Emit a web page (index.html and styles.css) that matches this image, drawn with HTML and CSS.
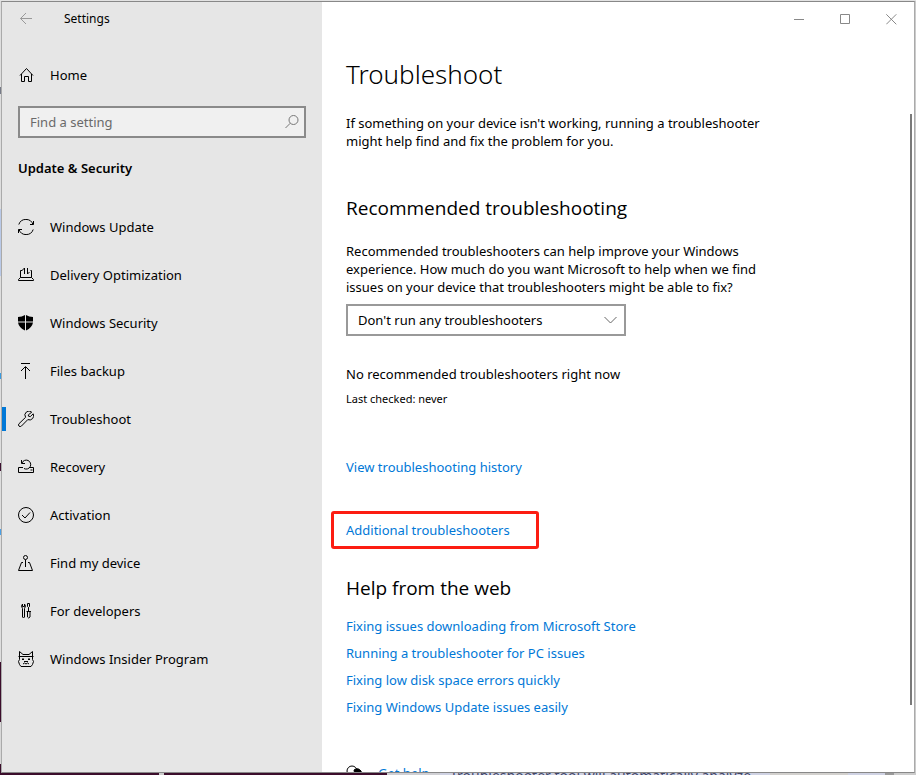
FILE: index.html
```
<!DOCTYPE html>
<html lang="en">
<head>
<meta charset="utf-8">
<title>Settings</title>
<link rel="stylesheet" href="styles.css">
</head>
<body>
<div class="desktop">
  <div class="edge"></div>
  <div class="window">
    <aside class="sidebar">
      <header class="titlebar">
        <button class="back" type="button" aria-label="Back">
          <svg class="icon" viewBox="0 0 16 16"><path d="M14 7.500H2.500M8 2 2.500 7.500 8 13"/></svg>
        </button>
        <span class="app-name">Settings</span>
      </header>
      <a class="item home" href="#">
        <svg class="icon" viewBox="0 0 16 16"><path d="M3.500 7v7.500h3V9.500h4v5h3V7M2 8.500 8.500 1.500 15 8.500"/></svg>
        <span>Home</span>
      </a>
      <label class="search">
        <input type="text" placeholder="Find a setting" aria-label="Find a setting">
        <svg class="icon" viewBox="0 0 16 16"><circle cx="9.500" cy="6" r="4.500"/><path d="M6.300 9.200 1.500 14"/></svg>
      </label>
      <h2 class="group">Update &amp; Security</h2>
      <nav>
        <a class="item" href="#">
          <svg class="icon" viewBox="0 0 16 16"><path d="M.8 5.500A7.500 7.500 0 0 1 15 5.500M15.500 2v3.500H12M15.200 10.500A7.500 7.500 0 0 1 1 10.500M.5 14V10.500H4"/></svg>
          <span>Windows Update</span>
        </a>
        <a class="item" href="#">
          <svg class="icon" viewBox="0 0 16 16"><path d="M4.500 3.500h-2v7h11v-7h-1M2.500 10.500l-2 2v1h15v-1l-2-2M6.500 7V1M4.500 3l2-2M9.500 1v6M9.500 7l2-2"/></svg>
          <span>Delivery Optimization</span>
        </a>
        <a class="item" href="#">
          <svg class="icon solid" viewBox="0 0 16 16"><path d="M0 2Q4 2 7 0v6.500H0zM8 0q3 2 7 2V6.500H8zM0 7.500h7v8Q.8 12.500 0 7.500zM8 7.500h7q-.8 5-7 8z"/></svg>
          <span>Windows Security</span>
        </a>
        <a class="item" href="#">
          <svg class="icon" viewBox="0 0 16 16"><path d="M3 .5h9M7.500 16V4M3 8l4.500-4.500L12 8"/></svg>
          <span>Files backup</span>
        </a>
        <a class="item current" href="#">
          <svg class="icon" viewBox="0 0 16 16"><path d="M13.700 1.200A4 4 0 0 0 7.600 6.300L1 12.700a1.600 1.600 0 0 0 2.400 2.400L9.800 8.600A4.200 4.200 0 0 0 15.200 2.800L12.300 5.600 10.500 5.200 10.300 3.900z"/></svg>
          <span>Troubleshoot</span>
        </a>
        <a class="item" href="#">
          <svg class="icon" viewBox="0 0 16 16"><path d="M5 8.500H.5v5h15v-5H11M12.500 11h2M3.500 1v3.500H7M4 4a4.500 4.500 0 1 1 2 5.500"/></svg>
          <span>Recovery</span>
        </a>
        <a class="item" href="#">
          <svg class="icon" viewBox="0 0 16 16"><circle cx="8" cy="8" r="7.500"/><path d="M4 8l3 3 5-5.500"/></svg>
          <span>Activation</span>
        </a>
        <a class="item" href="#">
          <svg class="icon" viewBox="0 0 16 16"><circle cx="7.500" cy="2.500" r="2"/><path d="M7.500 4.500V12M5 7.500H3.500l-3 8h14l-3-8H10"/></svg>
          <span>Find my device</span>
        </a>
        <a class="item" href="#">
          <svg class="icon" viewBox="0 0 16 16"><path d="M4.500 1Q2.500 3 4.500 5.500V14q1 2 2 0V5.500Q8.500 3 6.500 1v2.500h-2zM9.500.5h2v3l-1 1-1-1zM10.500 4.500v4M8.500 8.500H13M9.500 8.500V14q1 2 2.500 0V8.500"/></svg>
          <span>For developers</span>
        </a>
        <a class="item" href="#">
          <svg class="icon" viewBox="0 0 16 16"><path d="M1.500 5.500v-5L5 3.500h6l3.500-3v5M.5 5.500h15M1.500 5.500v3l-1 2 1 3L3 15.500h10l1.500-2 1-3-1-2v-3M4 8.500h2M10 8.500h2M6 10.500h4M5 13q1.500-2 3 0 1.500-2 3 0M5 7v2M11 7v2"/></svg>
          <span>Windows Insider Program</span>
        </a>
      </nav>
    </aside>
    <main class="content">
      <div class="titlebar controls">
        <button type="button" aria-label="Minimize"><svg viewBox="0 0 11 11"><path d="M0 5.500h10"/></svg></button>
        <button type="button" aria-label="Maximize"><svg viewBox="0 0 11 11"><path d="M.5.500h9v9h-9z"/></svg></button>
        <button type="button" aria-label="Close"><svg viewBox="0 0 11 11"><path d="M.3.300l10 10M10.300.300l-10 10"/></svg></button>
      </div>
      <div class="page">
        <h1>Troubleshoot</h1>
        <p>If something on your device isn't working, running a troubleshooter might help find and fix the problem for you.</p>
        <h2 class="recommended">Recommended troubleshooting</h2>
        <p><label for="mode">Recommended troubleshooters can help improve your Windows experience. How much do you want Microsoft to help when we find issues on your device that troubleshooters might be able to fix?</label></p>
        <div class="picker">
          <select id="mode"><option>Don't run any troubleshooters</option></select>
          <svg viewBox="0 0 13 8"><path d="M.5 1l6 6 6-6"/></svg>
        </div>
        <p>No recommended troubleshooters right now</p>
        <p class="checked">Last checked: never</p>
        <a href="#">View troubleshooting history</a>
        <a class="additional" href="#">Additional troubleshooters</a>
        <h2>Help from the web</h2>
        <ul>
          <li><a href="#">Fixing issues downloading from Microsoft Store</a></li>
          <li><a href="#">Running a troubleshooter for PC issues</a></li>
          <li><a href="#">Fixing low disk space errors quickly</a></li>
          <li><a href="#">Fixing Windows Update issues easily</a></li>
        </ul>
        <a class="get-help" href="#">
          <svg class="icon" viewBox="0 0 16 16"><circle cx="6" cy="7" r="5"/><path class="fill" d="M8 6q4-3 7 1l1 4H9z"/></svg>
          <span>Get help</span>
        </a>
      </div>
      <div class="thumb"></div>
    </main>
  </div>
  <div class="edge right"></div>
  <div class="behind"><span>Troubleshooter tool will automatically analyze</span></div>
</div>
</body>
</html>
```
FILE: styles.css
```
* { box-sizing: border-box; }

body {
  margin: 0;
  font: 13px/18px "Noto Sans", "Open Sans", sans-serif;
  color: #000;
}

h1, h2, p, ul { margin: 0; padding: 0; }
h1, h2 { font-weight: 400; }
ul { list-style: none; }
a { color: #0078d7; text-decoration: none; }
button { border: 0; padding: 0; background: none; }
svg { fill: none; stroke: currentColor; flex: none; }

.desktop {
  display: grid;
  grid-template-columns: 1px minmax(0, 1fr) 1px;
  grid-template-rows: minmax(0, 1fr) 2px;
  height: 100vh;
  padding-top: 1px;
  background: #e3e3e3;
}

.edge {
  background: linear-gradient(#dedede 0 86px, #777b88 86px 93px, #dedede 93px 208px, #b9c9e8 208px 275px, #dedede 275px 372px, #3a9be0 372px 378px, #dedede 378px 462px, #3c1030 462px 470px, #dedede 470px 528px, #4aa0e6 528px 534px, #dedede 534px 661px, #3c0d2b 661px 721px, #d8d8d8 721px 763px, #3c0d2b 763px);
}
.edge.right { background: #cbcbcb; }

.window {
  display: grid;
  grid-template-columns: 320px minmax(0, 1fr);
  border: 1px solid #888;
  border-left-color: #aaa;
  border-right-color: #aaa;
  overflow: hidden;
  background: #fff;
}

.sidebar {
  background: #e6e6e6;
  overflow: hidden;
}

.titlebar {
  display: flex;
  align-items: center;
  height: 34px;
}

.back {
  display: flex;
  margin: 0 30px 0 16px;
  color: #999;
}

.app-name { font-size: 12px; }

.icon { width: 16px; height: 16px; }
.solid { fill: currentColor; stroke: none; }

.item {
  display: flex;
  align-items: center;
  gap: 16px;
  height: 48px;
  padding-left: 16px;
  color: #000;
}
.home { margin-top: 15px; }

.current {
  background: linear-gradient(#0078d7, #0078d7) left center / 4px 24px no-repeat;
}

.search {
  display: flex;
  align-items: center;
  height: 32px;
  margin: 7px 16px 0;
  padding: 0 4px 0 10px;
  border: 2px solid #8a8a8a;
  background: #f0f0f0;
  color: #777;
}
.search input {
  flex: 1;
  min-width: 0;
  padding: 0;
  border: 0;
  outline: 0;
  background: none;
  font: inherit;
}
.search input::placeholder { color: #6a6a6a; }

.group {
  margin: 21px 16px 26px;
  font-size: 13px;
  font-weight: 600;
}

.content {
  position: relative;
  overflow: hidden;
}

.controls { justify-content: flex-end; }
.controls button {
  display: flex;
  justify-content: center;
  width: 46px;
  color: #888;
}
.controls svg { width: 11px; height: 11px; }

.page {
  display: flex;
  flex-direction: column;
  align-items: flex-start;
  padding: 18px 24px 0;
}

h1 {
  margin-bottom: 20px;
  font-size: 26px;
  font-weight: 300;
  line-height: 40px;
}

.page h2 {
  font-family: "Open Sans", "Noto Sans", sans-serif;
  font-size: 19px;
  line-height: 28px;
}

.page p { max-width: 428px; }

.page .recommended { margin: 44px 0 20px; }

.picker {
  display: grid;
  align-items: center;
  width: 280px;
  margin: 8px 0 29px;
}
.picker select, .picker svg { grid-area: 1 / 1; }
.picker select {
  height: 32px;
  padding: 0 10px;
  border: 2px solid #999;
  border-radius: 0;
  background: #fff;
  color: #000;
  font: inherit;
  appearance: none;
}
.picker svg {
  justify-self: end;
  width: 13px;
  height: 8px;
  margin-right: 9px;
  color: #666;
  pointer-events: none;
}

.page .checked {
  margin: 8px 0 51px;
  font-size: 11px;
  line-height: 16px;
}

.additional {
  width: 208px;
  margin: 35px 0 25px -15px;
  padding: 7px 12px;
  border: 3px solid #fc1d12;
  border-radius: 3px;
}

.page ul { margin: 11px 0 43px; }
.page li { line-height: 27px; }

.get-help {
  display: flex;
  gap: 16px;
}
.get-help .icon { color: #000; }
.fill { fill: currentColor; }

.thumb {
  position: absolute;
  top: 112px;
  right: 2px;
  bottom: 67px;
  width: 2px;
  background: #7a7a7a;
}

.behind {
  grid-column: 1 / -1;
  display: flex;
  align-items: flex-end;
  overflow: hidden;
  padding-left: 450px;
  background: linear-gradient(90deg, #3c0d2b 0 159px, #ccc 159px 164px, #3c0d2b 164px 387px, #d0d0d4 387px 440px, #cfd2e3 440px 770px, #d2d0cd 770px 848px, #cfd2e3 848px 885px, #999 885px 894px, #ccc 894px);
  color: #404568;
}
.behind span {
  height: 8px;
  font-size: 14px;
  line-height: 18px;
  white-space: nowrap;
}
```
